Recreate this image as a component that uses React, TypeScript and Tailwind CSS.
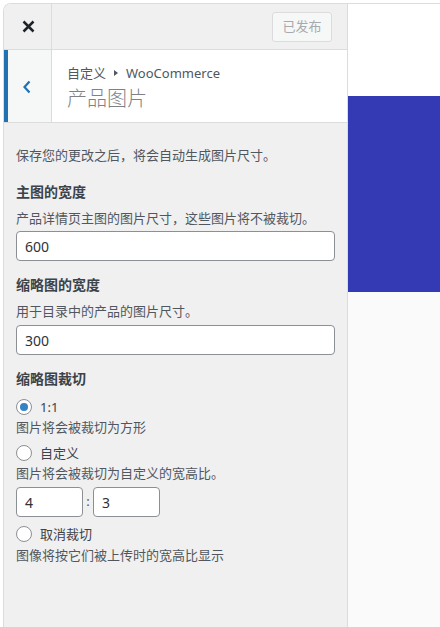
import React from "react";

const font = { fontFamily: '"Noto Sans", "Noto Sans CJK SC", sans-serif' };

function Radio({ checked, label }: { checked?: boolean; label: string }) {
  return (
    <div className="flex items-center h-[20px]">
      <span className="w-[16px] h-[16px] rounded-full border border-[#8c8f94] bg-white flex items-center justify-center shrink-0">
        {checked && <span className="w-[8px] h-[8px] rounded-full bg-[#3582c4]" />}
      </span>
      <span className="ml-[8px] text-[13px] leading-[20px] text-[#3c434a]">{label}</span>
    </div>
  );
}

export default function App() {
  return (
    <div className="h-[627px] w-[440px] bg-white pt-[3px] pl-[3px] flex overflow-hidden" style={font}>
      <div className="flex-1 flex border-t border-l border-[#dcdcde] rounded-tl-[8px] overflow-hidden">
        {/* Sidebar */}
        <div className="w-[344px] shrink-0 border-r border-[#dcdcde] bg-[#f0f0f0] flex flex-col">
          {/* top bar */}
          <div className="h-[46px] border-b border-[#dcdcde] flex items-stretch">
            <div className="w-[48px] border-r border-[#dcdcde] flex items-center justify-center pl-[1px]">
              <svg width="13" height="13" viewBox="0 0 13 13">
                <path d="M1.5 1.5 L11.5 11.5 M11.5 1.5 L1.5 11.5" stroke="#1d2327" strokeWidth="2.5" strokeLinecap="butt" />
              </svg>
            </div>
            <div className="flex-1 flex items-center justify-end pr-[15px] pt-[1px]">
              <div className="w-[60px] h-[30px] rounded-[3px] border border-[#dcdcde] bg-[#f6f7f7] flex items-center justify-center text-[13px] text-[#a7aaad]">
                已发布
              </div>
            </div>
          </div>
          {/* section header */}
          <div className="h-[73px] border-b border-[#dcdcde] bg-white flex">
            <div className="w-[48px] border-l-[4px] border-l-[#2271b1] border-r border-[#dcdcde] bg-[#f6f7f7] flex items-center justify-center pr-[5px] pt-[1px]">
              <svg width="10" height="14" viewBox="0 0 10 14">
                <path d="M7.5 1.5 L2.5 7 L7.5 12.5" fill="none" stroke="#2271b1" strokeWidth="2.2" />
              </svg>
            </div>
            <div className="pl-[15px] pt-[13px]">
              <div className="flex items-center text-[13px] leading-[20px] text-[#50575e]">
                <span>自定义</span>
                <svg width="6" height="8" viewBox="0 0 6 8" className="mx-[7px]">
                  <path d="M1 1 L5 4 L1 7 Z" fill="#50575e" />
                </svg>
                <span>WooCommerce</span>
              </div>
              <div className="mt-[3px] text-[20px] leading-[26px] font-extralight text-[#7e8287]">产品图片</div>
            </div>
          </div>
          {/* content */}
          <div className="px-[12px] pt-[22px] text-[#50575e]">
            <div className="text-[13px] leading-[20px]">保存您的更改之后，将会自动生成图片尺寸。</div>

            <div className="mt-[17px] text-[14px] leading-[20px] font-semibold text-[#3c434a]">主图的宽度</div>
            <div className="mt-[6px] text-[13px] leading-[20px]">产品详情页主图的图片尺寸，这些图片将不被裁切。</div>
            <div className="mt-[3px] h-[30px] rounded-[4px] border border-[#8c8f94] bg-white flex items-center pl-[8px] text-[14px] text-[#2c3338]">
              600
            </div>

            <div className="mt-[14px] text-[14px] leading-[20px] font-semibold text-[#3c434a]">缩略图的宽度</div>
            <div className="mt-[6px] text-[13px] leading-[20px]">用于目录中的产品的图片尺寸。</div>
            <div className="mt-[4px] h-[30px] rounded-[4px] border border-[#8c8f94] bg-white flex items-center pl-[8px] text-[14px] text-[#2c3338]">
              300
            </div>

            <div className="mt-[14px] text-[14px] leading-[20px] font-semibold text-[#3c434a]">缩略图裁切</div>
            <div className="mt-[8px]">
              <Radio checked label="1:1" />
            </div>
            <div className="text-[13px] leading-[20px]">图片将会被裁切为方形</div>
            <div className="mt-[6px]">
              <Radio label="自定义" />
            </div>
            <div className="text-[13px] leading-[20px]">图片将会被裁切为自定义的宽高比。</div>
            <div className="mt-[4px] flex items-center">
              <div className="w-[67px] h-[30px] rounded-[4px] border border-[#8c8f94] bg-white flex items-center pl-[8px] text-[14px] text-[#2c3338]">
                4
              </div>
              <span className="w-[10px] text-center text-[13px] text-[#50575e]">:</span>
              <div className="w-[67px] h-[30px] rounded-[4px] border border-[#8c8f94] bg-white flex items-center pl-[8px] text-[14px] text-[#2c3338]">
                3
              </div>
            </div>
            <div className="mt-[7px]">
              <Radio label="取消裁切" />
            </div>
            <div className="mt-[1px] text-[13px] leading-[20px]">图像将按它们被上传时的宽高比显示</div>
          </div>
        </div>
        {/* Preview */}
        <div className="flex-1 flex flex-col bg-[#fafafa]">
          <div className="h-[92px] bg-white" />
          <div className="h-[196px] bg-[#333ab4]" />
          <div className="flex-1 bg-[#fafafa]" />
        </div>
      </div>
    </div>
  );
}
